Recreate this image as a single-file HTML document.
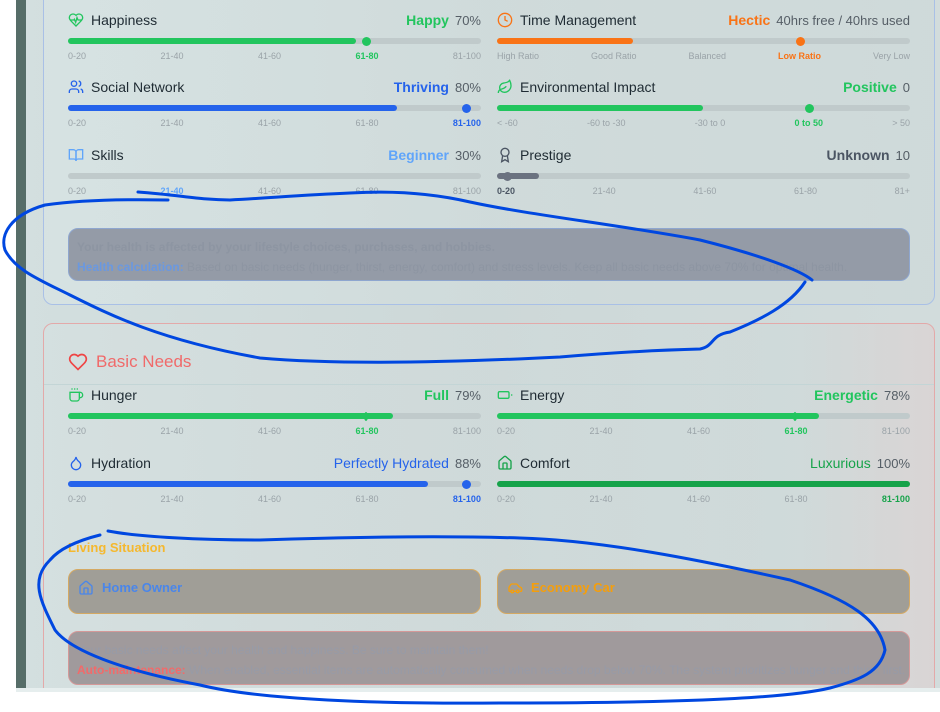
<!DOCTYPE html>
<html><head><meta charset="utf-8">
<style>
*{margin:0;padding:0;box-sizing:border-box}
body{width:940px;height:712px;overflow:hidden;background:#fff;font-family:"Liberation Sans","DejaVu Sans",sans-serif;position:relative}
#clip{position:absolute;left:0;top:0;width:940px;height:688px;overflow:hidden}
#page{position:absolute;left:16px;top:0;width:924px;height:688px;background:linear-gradient(90deg,#d3dfdf,#cdd8d8 50%,#d2dcdc)}
#strip{position:absolute;left:16px;top:0;width:10px;height:688px;background:#566d68}
#bot{position:absolute;left:16px;top:688px;width:924px;height:4px;background:#e6eeee}
.card{position:absolute;border-radius:10px}
.m{position:absolute;width:413px;height:50px}
.t{position:absolute;left:0;top:-10px;height:20px;width:100%;font-size:14px;color:#1f2b33;display:flex;align-items:center}
.t svg{width:16px;height:16px;margin-right:7px;flex:none}
.t .r{margin-left:auto;display:flex;align-items:center}
.t .s{font-weight:bold;margin-right:6px}
.t .v{font-size:13px;color:#555e66}
.bar{position:absolute;left:0;top:18px;width:100%;height:6px;border-radius:3px;background:#c0cacb}
.fill{position:absolute;left:0;top:0;height:6px;border-radius:3px}
.dot{position:absolute;top:-1.5px;width:9px;height:9px;border-radius:50%;margin-left:-4.5px}
.lb{position:absolute;left:0;top:31px;width:100%;display:flex;justify-content:space-between;font-size:9px;color:#9aa3a8}
.lb b{font-weight:bold}
.box{position:absolute;border-radius:10px;font-size:12px;overflow:hidden;white-space:nowrap}
</style></head><body>
<div id="clip">
<div id="page"></div>
<div id="strip"></div>

<div class="card" style="left:43px;top:-20px;width:892px;height:325px;border:1px solid #a9c0e6;background:linear-gradient(90deg,rgba(220,232,232,.4),rgba(200,212,212,.3))"></div>
<div class="card" style="left:43px;top:323px;width:892px;height:400px;border:1px solid #e3a9a9;background:linear-gradient(90deg,rgba(215,225,225,.4),rgba(205,215,215,.3) 85%,rgba(225,205,205,.5))"></div>
<div style="position:absolute;left:44px;top:384px;width:890px;height:1px;background:#c3d5d6"></div>

<div class="m" style="left:68px;top:20px">
 <div class="t"><svg viewBox="0 0 24 24" fill="none" stroke="#22c55e" stroke-width="2"><path d="M19 14c1.5-1.5 3-3.2 3-5.5A5.5 5.5 0 0 0 16.5 3c-1.8 0-3 .5-4.5 2-1.5-1.5-2.7-2-4.5-2A5.5 5.5 0 0 0 2 8.5c0 2.3 1.5 4 3 5.5l7 7Z"/><path d="M3.2 12H9l.5-1 2 4.5 2-7 1.5 3.5h5.3"/></svg>Happiness<span class="r"><span class="s" style="color:#22c55e">Happy</span><span class="v">70%</span></span></div>
 <div class="bar"><div class="fill" style="width:288px;background:#22c55e"></div><div class="dot" style="left:298px;background:#22c55e"></div></div>
 <div class="lb"><span>0-20</span><span>21-40</span><span>41-60</span><b style="color:#22c55e">61-80</b><span>81-100</span></div>
</div>
<div class="m" style="left:497px;top:20px">
 <div class="t"><svg viewBox="0 0 24 24" fill="none" stroke="#f97316" stroke-width="2"><circle cx="12" cy="12" r="10"/><path d="M12 6v6l4 2"/></svg>Time Management<span class="r"><span class="s" style="color:#f97316">Hectic</span><span class="v">40hrs free / 40hrs used</span></span></div>
 <div class="bar"><div class="fill" style="width:136px;background:#f97316"></div><div class="dot" style="left:303px;background:#f97316"></div></div>
 <div class="lb"><span>High Ratio</span><span>Good Ratio</span><span>Balanced</span><b style="color:#f97316">Low Ratio</b><span>Very Low</span></div>
</div>

<div class="m" style="left:68px;top:87px">
 <div class="t"><svg viewBox="0 0 24 24" fill="none" stroke="#2563eb" stroke-width="2"><path d="M16 21v-2a4 4 0 0 0-4-4H6a4 4 0 0 0-4 4v2"/><circle cx="9" cy="7" r="4"/><path d="M22 21v-2a4 4 0 0 0-3-3.9M16 3.1a4 4 0 0 1 0 7.8"/></svg>Social Network<span class="r"><span class="s" style="color:#2563eb">Thriving</span><span class="v">80%</span></span></div>
 <div class="bar"><div class="fill" style="width:329px;background:#2563eb"></div><div class="dot" style="left:398px;background:#2563eb"></div></div>
 <div class="lb"><span>0-20</span><span>21-40</span><span>41-60</span><span>61-80</span><b style="color:#2563eb">81-100</b></div>
</div>
<div class="m" style="left:497px;top:87px">
 <div class="t"><svg viewBox="0 0 24 24" fill="none" stroke="#22c55e" stroke-width="2"><path d="M11 20A7 7 0 0 1 9.8 6.1C15.5 5 17 4.5 19 2c1 2 2 4.2 2 8 0 5.5-4.8 10-10 10Z"/><path d="M2 21c0-3 1.9-5.4 5.2-6 2.5-.5 5-2 6.8-4"/></svg>Environmental Impact<span class="r"><span class="s" style="color:#22c55e">Positive</span><span class="v">0</span></span></div>
 <div class="bar"><div class="fill" style="width:206px;background:#22c55e"></div><div class="dot" style="left:312px;background:#22c55e"></div></div>
 <div class="lb"><span>&lt; -60</span><span>-60 to -30</span><span>-30 to 0</span><b style="color:#22c55e">0 to 50</b><span>&gt; 50</span></div>
</div>

<div class="m" style="left:68px;top:155px">
 <div class="t"><svg viewBox="0 0 24 24" fill="none" stroke="#60a5fa" stroke-width="2"><path d="M2 4h6a4 4 0 0 1 4 4v13a3 3 0 0 0-3-3H2Z"/><path d="M22 4h-6a4 4 0 0 0-4 4v13a3 3 0 0 1 3-3h7Z"/></svg>Skills<span class="r"><span class="s" style="color:#60a5fa">Beginner</span><span class="v">30%</span></span></div>
 <div class="bar"></div>
 <div class="lb"><span>0-20</span><b style="color:#60a5fa">21-40</b><span>41-60</span><span>61-80</span><span>81-100</span></div>
</div>
<div class="m" style="left:497px;top:155px">
 <div class="t"><svg viewBox="0 0 24 24" fill="none" stroke="#4b5563" stroke-width="2"><circle cx="12" cy="8" r="6"/><path d="M15.5 12.9 17 22l-5-3-5 3 1.5-9.1"/></svg>Prestige<span class="r"><span class="s" style="color:#4b5563">Unknown</span><span class="v">10</span></span></div>
 <div class="bar"><div class="fill" style="width:42px;background:#6b7280"></div><div class="dot" style="left:10px;background:#6b7280"></div></div>
 <div class="lb"><b style="color:#4b5563">0-20</b><span>21-40</span><span>41-60</span><span>61-80</span><span>81+</span></div>
</div>

<div class="box" style="left:68px;top:228px;width:842px;height:53px;background:#949ba7;border:1px solid #8ea6cf;padding:8px 8px;line-height:20px;color:#8d95a2">
 <div style="font-weight:bold">Your health is affected by your lifestyle choices, purchases, and hobbies.</div>
 <div><b style="color:#6a98e0">Health calculation:</b> Based on basic needs (hunger, thirst, energy, comfort) and stress levels. Keep all basic needs above 70% for optimal health.</div>
</div>

<div style="position:absolute;left:68px;top:352px;display:flex;align-items:center;font-size:17px;color:#f06a6a">
<svg width="20" height="20" viewBox="0 0 24 24" fill="none" stroke="#ef4444" stroke-width="2" style="margin-right:8px"><path d="M19 14c1.5-1.5 3-3.2 3-5.5A5.5 5.5 0 0 0 16.5 3c-1.8 0-3 .5-4.5 2-1.5-1.5-2.7-2-4.5-2A5.5 5.5 0 0 0 2 8.5c0 2.3 1.5 4 3 5.5l7 7Z"/></svg>Basic Needs</div>

<div class="m" style="left:68px;top:395px">
 <div class="t"><svg viewBox="0 0 24 24" fill="none" stroke="#22c55e" stroke-width="2"><path d="M17 8h1a4 4 0 1 1 0 8h-1"/><path d="M3 8h14v9a4 4 0 0 1-4 4H7a4 4 0 0 1-4-4Z"/><path d="M6 2v2M10 2v2M14 2v2"/></svg>Hunger<span class="r"><span class="s" style="color:#22c55e">Full</span><span class="v">79%</span></span></div>
 <div class="bar"><div class="fill" style="width:325px;background:#22c55e"></div><div class="dot" style="left:298px;background:#22c55e;width:4px;margin-left:-2px"></div></div>
 <div class="lb"><span>0-20</span><span>21-40</span><span>41-60</span><b style="color:#22c55e">61-80</b><span>81-100</span></div>
</div>
<div class="m" style="left:497px;top:395px">
 <div class="t"><svg viewBox="0 0 24 24" fill="none" stroke="#22c55e" stroke-width="2"><rect x="2" y="7" width="16" height="10" rx="2"/><path d="M22 11v2"/></svg>Energy<span class="r"><span class="s" style="color:#22c55e">Energetic</span><span class="v">78%</span></span></div>
 <div class="bar"><div class="fill" style="width:322px;background:#22c55e"></div><div class="dot" style="left:298px;background:#22c55e;width:4px;margin-left:-2px"></div></div>
 <div class="lb"><span>0-20</span><span>21-40</span><span>41-60</span><b style="color:#22c55e">61-80</b><span>81-100</span></div>
</div>
<div class="m" style="left:68px;top:463px">
 <div class="t"><svg viewBox="0 0 24 24" fill="none" stroke="#2563eb" stroke-width="2"><path d="M12 22a7 7 0 0 0 7-7c0-2-1-3.9-3-5.5s-3.5-4-4-6.5c-.5 2.5-2 4.9-4 6.5S5 13 5 15a7 7 0 0 0 7 7Z"/></svg>Hydration<span class="r"><span class="s" style="color:#2563eb;font-weight:normal">Perfectly Hydrated</span><span class="v">88%</span></span></div>
 <div class="bar"><div class="fill" style="width:360px;background:#2563eb"></div><div class="dot" style="left:398px;background:#2563eb"></div></div>
 <div class="lb"><span>0-20</span><span>21-40</span><span>41-60</span><span>61-80</span><b style="color:#2563eb">81-100</b></div>
</div>
<div class="m" style="left:497px;top:463px">
 <div class="t"><svg viewBox="0 0 24 24" fill="none" stroke="#16a34a" stroke-width="2"><path d="M3 10a2 2 0 0 1 .7-1.5l7-6a2 2 0 0 1 2.6 0l7 6A2 2 0 0 1 21 10v9a2 2 0 0 1-2 2H5a2 2 0 0 1-2-2Z"/><path d="M9 21v-8a1 1 0 0 1 1-1h4a1 1 0 0 1 1 1v8"/></svg>Comfort<span class="r"><span class="s" style="color:#16a34a;font-weight:normal">Luxurious</span><span class="v">100%</span></span></div>
 <div class="bar"><div class="fill" style="width:413px;background:#16a34a"></div></div>
 <div class="lb"><span>0-20</span><span>21-40</span><span>41-60</span><span>61-80</span><b style="color:#16a34a">81-100</b></div>
</div>

<div style="position:absolute;left:68px;top:540px;font-size:13px;font-weight:bold;color:#f5b82e">Living Situation</div>
<div class="box" style="left:68px;top:569px;width:413px;height:45px;background:#a09e97;border:1px solid #d4a963;display:flex;align-items:flex-start;padding:10px 9px;font-size:13px;font-weight:bold;color:#4a86ea">
<svg width="16" height="16" viewBox="0 0 24 24" fill="none" stroke="#4a86ea" stroke-width="2" style="margin-right:8px"><path d="M3 10a2 2 0 0 1 .7-1.5l7-6a2 2 0 0 1 2.6 0l7 6A2 2 0 0 1 21 10v9a2 2 0 0 1-2 2H5a2 2 0 0 1-2-2Z"/><path d="M9 21v-8a1 1 0 0 1 1-1h4a1 1 0 0 1 1 1v8"/></svg>Home Owner</div>
<div class="box" style="left:497px;top:569px;width:413px;height:45px;background:#a09e97;border:1px solid #d4a963;display:flex;align-items:flex-start;padding:10px 9px;font-size:13px;font-weight:bold;color:#f59e0b">
<svg width="16" height="16" viewBox="0 0 24 24" fill="none" stroke="#f59e0b" stroke-width="2" style="margin-right:8px"><path d="M19 17h2c.6 0 1-.4 1-1v-3c0-.9-.7-1.7-1.5-1.9L18 10l-2.7-3.4A2 2 0 0 0 13.7 6H7.3a2 2 0 0 0-1.7 1L3 11v5c0 .6.4 1 1 1h2"/><circle cx="8" cy="17" r="2"/><circle cx="16" cy="17" r="2"/><path d="M10 17h4"/></svg>Economy Car</div>

<div class="box" style="left:68px;top:631px;width:842px;height:54px;background:#a09a9c;border:1px solid #d49898;padding:8px 8px;line-height:20px;color:#979ba7;font-size:12px">
 <div>Your basic needs affect your health and happiness. Be sure to maintain them!</div>
 <div><b style="color:#f26a6a">Auto-maintenance:</b> When enabled, essential items are automatically consumed when needs drop below 70%. The system prioritizes hunger and thirst first.</div>
</div>
</div>
<div id="bot"></div>

<svg style="position:absolute;left:0;top:0" width="940" height="712" viewBox="0 0 940 712" fill="none" stroke="#0047e0" stroke-width="3" stroke-linecap="round">
<path d="M138 192C180 195 200 200 230 200C270 198 300 195 350 193C400 190 440 195 470 202C530 215 620 225 700 240C760 255 800 270 812 280"/>
<path d="M168 200C120 199 80 200 45 205C10 215 0 235 5 250C15 270 40 280 70 295C110 315 160 340 260 358C340 365 460 362 560 357C620 352 660 350 700 349C715 346 710 335 730 332C760 320 790 305 805 282"/>
<path d="M108 531C140 537 200 540 260 540C320 538 420 535 520 538C600 540 700 560 790 580C850 600 880 620 885 650C880 672 860 680 830 688C780 700 650 703 500 703C380 704 260 700 200 685C120 670 70 650 55 630C40 600 30 580 50 560C60 548 80 540 100 535"/>
</svg>
</body></html>
